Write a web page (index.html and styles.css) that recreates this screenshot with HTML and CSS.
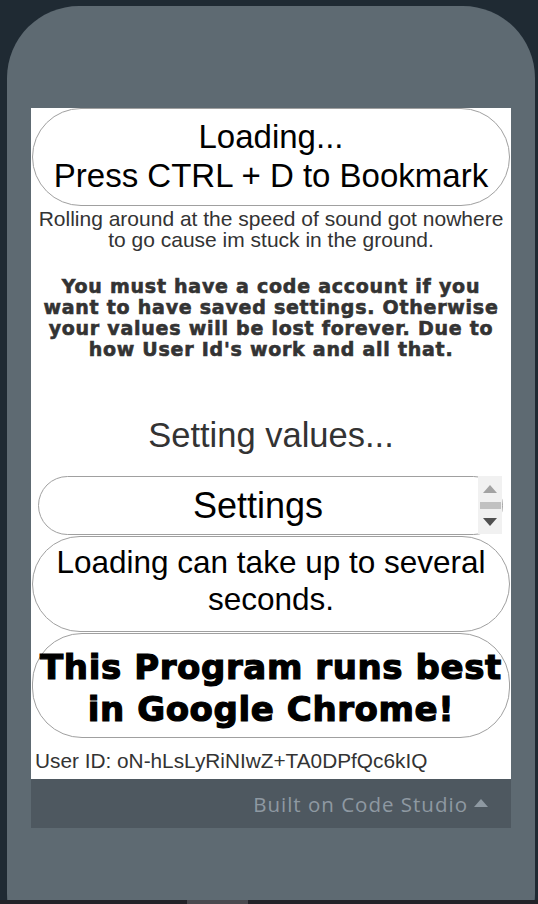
FILE: index.html
```html
<!DOCTYPE html>
<html>
<head>
<meta charset="utf-8">
<link rel="stylesheet" href="styles.css">
</head>
<body>
<div class="phone">
  <div class="screen">
    <div class="pill pill-top">Loading...<br>Press CTRL + D to Bookmark</div>
    <p class="lyric">Rolling around at the speed of sound got nowhere<br>to go cause im stuck in the ground.</p>
    <p class="notice">You must have a code account if you<br>want to have saved settings. Otherwise<br>your values will be lost forever. Due to<br>how User Id's work and all that.</p>
    <p class="status">Setting values...</p>
    <div class="settings-wrap">
      <div class="pill pill-settings">Settings</div>
      <div class="scrollbar">
        <svg class="sb-arrow" width="14" height="8" viewBox="0 0 14 8"><path d="M0 8 L7 0 L14 8 Z" fill="#a3a3a3"/></svg>
        <div class="sb-thumb"></div>
        <svg class="sb-arrow" width="14" height="8" viewBox="0 0 14 8"><path d="M0 0 L7 8 L14 0 Z" fill="#505050"/></svg>
      </div>
    </div>
    <div class="pill pill-loading">Loading can take up to several<br>seconds.</div>
    <div class="pill pill-chrome">This Program runs best<br>in Google Chrome!</div>
    <p class="userid">User ID: oN-hLsLyRiNIwZ+TA0DPfQc6kIQ</p>
  </div>
  <div class="footer">
    <span class="footer-text">Built on Code Studio</span>
    <svg class="footer-caret" width="14" height="8" viewBox="0 0 14 8"><path d="M0 8 L7 0 L14 8 Z" fill="#8e99a2"/></svg>
  </div>
</div>
<div class="hscroll"><div class="hscroll-thumb"></div></div>
</body>
</html>
```
FILE: styles.css
```css
html, body {
  margin: 0;
  padding: 0;
}
body {
  background: #1f2a33;
  width: 538px;
  height: 904px;
  overflow: hidden;
  font-family: "Liberation Sans", Arial, sans-serif;
}
.phone {
  margin: 6px 0 0 7px;
  width: 528px;
  height: 960px;
  box-sizing: border-box;
  padding: 102px 24px 0;
  background: #5e6a72;
  border-radius: 72px;
}
.screen {
  width: 480px;
  height: 671px;
  background: #ffffff;
  display: flex;
  flex-direction: column;
}
.pill {
  border: 1px solid #a0a0a0;
  border-radius: 50px;
  box-sizing: border-box;
  text-align: center;
  color: #000;
}
.pill-top {
  margin-left: 1px;
  width: 478px;
  height: 98px;
  padding-top: 8px;
  font-size: 33px;
  line-height: 39px;
}
.lyric {
  margin: 2px 0 0;
  text-align: center;
  color: #333;
  font-size: 21px;
  line-height: 21px;
}
.notice {
  margin: 26px 0 0;
  text-align: center;
  color: #333;
  font-family: "DejaVu Sans", sans-serif;
  font-weight: bold;
  font-size: 19px;
  line-height: 21px;
  letter-spacing: 0.75px;
  -webkit-text-stroke: 0.6px #333;
}
.status {
  margin: 55px 0 0;
  text-align: center;
  color: #333;
  font-size: 34.5px;
  line-height: 40px;
}
.settings-wrap {
  position: relative;
  margin: 21px 0 0 7px;
  width: 465px;
  height: 59px;
}
.pill-settings {
  height: 59px;
  padding-right: 25px;
  display: flex;
  align-items: center;
  justify-content: center;
  font-size: 36px;
  line-height: 40px;
}
.scrollbar {
  position: absolute;
  top: 0;
  right: 1px;
  width: 24px;
  height: 58px;
  background: #f1f1f1;
  display: flex;
  flex-direction: column;
  align-items: center;
  justify-content: space-between;
  padding: 9px 0 8px;
  box-sizing: border-box;
}
.sb-thumb {
  width: 21px;
  height: 7px;
  background: #c1c1c1;
}
.pill-loading {
  margin: 1px 0 0 1px;
  width: 478px;
  height: 96px;
  padding-top: 7px;
  font-size: 31.5px;
  line-height: 37px;
}
.pill-chrome {
  margin: 1px 0 0 1px;
  width: 478px;
  height: 105px;
  padding-top: 12px;
  font-family: "DejaVu Sans", sans-serif;
  font-weight: bold;
  font-size: 34px;
  line-height: 42px;
  letter-spacing: 0.6px;
  -webkit-text-stroke: 1.2px #000;
}
.userid {
  margin: 12px 0 0;
  padding-left: 4px;
  color: #333;
  font-size: 20.8px;
  line-height: 22px;
}
.footer {
  width: 480px;
  height: 49px;
  background: #4e5860;
  display: flex;
  align-items: center;
  justify-content: flex-end;
  gap: 6px;
  padding-right: 23px;
  box-sizing: border-box;
}
.footer-text {
  font-family: "Open Sans", Lato, sans-serif;
  font-size: 20.5px;
  color: #8e99a2;
  letter-spacing: 1px;
}
.footer-caret {
  margin-top: -2px;
}
.hscroll {
  position: fixed;
  left: 0;
  bottom: 0;
  width: 538px;
  height: 4px;
  background: #232228;
}
.hscroll-thumb {
  margin-left: 187px;
  width: 61px;
  height: 4px;
  background: #4a494f;
}
```
